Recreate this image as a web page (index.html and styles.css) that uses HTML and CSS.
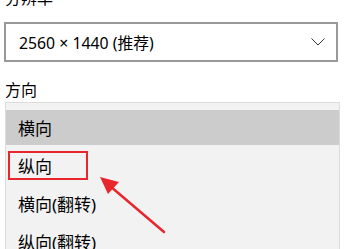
FILE: index.html
```html
<!DOCTYPE html>
<html lang="zh-CN">
<head>
<meta charset="utf-8">
<link rel="stylesheet" href="styles.css">
</head>
<body>
<div class="page">
  <div class="label label-top">分辨率</div>
  <div class="select">
    <span class="select-text">2560 × 1440 (推荐)</span>
    <svg class="chevron" width="14" height="8" viewBox="0 0 14 8"><path d="M0.5 0.5 L7 7 L13.5 0.5" fill="none" stroke="#333" stroke-width="1"/></svg>
  </div>
  <div class="label label-dir">方向</div>
  <div class="list">
    <div class="item selected">横向</div>
    <div class="item item-marked"><span class="mark">纵向</span></div>
    <div class="item">横向(翻转)</div>
    <div class="item">纵向(翻转)</div>
  </div>
  <svg class="arrow" width="351" height="249" viewBox="0 0 351 249">
    <line x1="164" y1="232" x2="110" y2="186" stroke="#e8262d" stroke-width="2.5" stroke-linecap="round"/>
    <polygon points="100,177 119,182 108,194" fill="#e8262d"/>
  </svg>
</div>
</body>
</html>
```
FILE: styles.css
```css
html, body {
  margin: 0;
  padding: 0;
  background: #fff;
}
.page {
  position: relative;
  width: 351px;
  height: 249px;
  overflow: hidden;
  font-family: "Noto Sans", "Noto Sans CJK SC", sans-serif;
  color: #000;
}
.label {
  font-size: 16px;
  line-height: 20px;
  padding-left: 5px;
}
.label-top {
  margin-top: -12px;
}
.select {
  margin: 14px 0 0 4px;
  width: 334px;
  height: 40px;
  box-sizing: border-box;
  border: 2px solid #999;
  display: flex;
  align-items: center;
  justify-content: space-between;
  padding: 0 11px 0 13px;
}
.select-text {
  font-size: 15.8px;
}
.chevron {
  display: block;
}
.label-dir {
  margin-top: 18px;
}
.list {
  margin: 2px 0 0 5px;
  width: 335px;
  box-sizing: border-box;
  border: 1px solid #dcdcdc;
  border-bottom: none;
  background: #f2f2f2;
  padding-top: 7px;
  height: 160px;
}
.item {
  height: 38px;
  display: flex;
  align-items: center;
  padding-left: 12px;
  font-size: 17px;
}
.item.selected {
  background: #cccccc;
  height: 35px;
  margin-bottom: 1px;
}
.item.item-marked {
  padding-left: 2px;
}
.mark {
  display: flex;
  align-items: center;
  width: 80px;
  height: 29px;
  box-sizing: border-box;
  border: 2px solid #e8262d;
  padding-left: 8px;
}
.arrow {
  position: absolute;
  left: 0;
  top: 0;
  pointer-events: none;
}
```
